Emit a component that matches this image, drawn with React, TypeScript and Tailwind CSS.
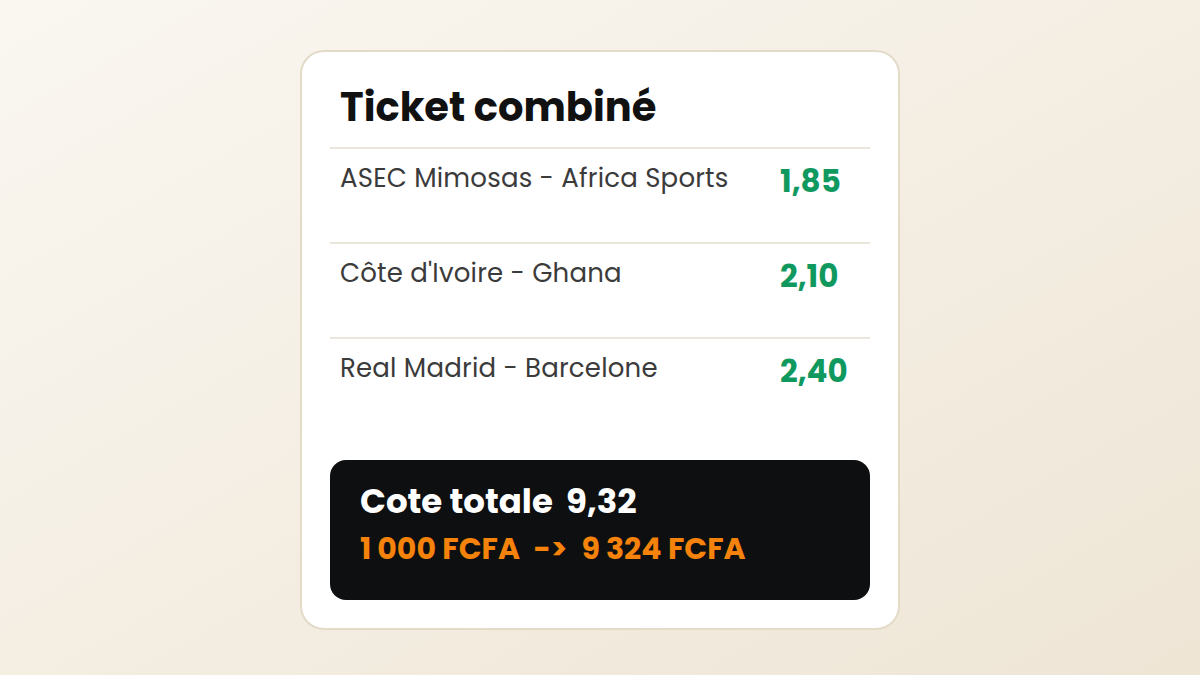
import React from 'react';

const odds = [
  { match: 'ASEC Mimosas - Africa Sports', cote: '1,85' },
  { match: "Côte d'Ivoire - Ghana", cote: '2,10' },
  { match: 'Real Madrid - Barcelone', cote: '2,40' },
];

export default function App() {
  return (
    <div
      className="w-[1200px] h-[675px] flex items-center justify-center bg-gradient-to-br from-[#faf7f1] via-[#f4eee3] to-[#eee5d5]"
      style={{ fontFamily: '"Poppins", "Open Sans", "DejaVu Sans", sans-serif' }}
    >
      <div className="w-[600px] h-[580px] mt-[4px] bg-white border-2 border-[#e3dbc8] rounded-[24px] px-[28px] pb-[28px] flex flex-col">
        {/* Title */}
        <div className="h-[95px] flex items-center pl-[10px] pt-[16px]">
          <h1 className="text-[40px] font-bold text-[#111111] leading-none">Ticket combiné</h1>
        </div>

        {/* Rows */}
        <div className="flex flex-col">
          {odds.map((o) => (
            <div
              key={o.match}
              className="h-[95px] border-t-2 border-[#ebe6dc] grid grid-cols-[1fr_90px] pl-[10px] pt-[12px]"
            >
              <span className="text-[26px] leading-[34px] tracking-[0.2px] text-[#3b3b3b]">{o.match}</span>
              <span className="text-[31px] leading-[40px] font-bold text-[#10995f]">{o.cote}</span>
            </div>
          ))}
        </div>

        {/* Total */}
        <div className="mt-auto h-[140px] rounded-[16px] bg-[#0e0f10] px-[30px] pt-[19px] flex flex-col gap-[8px]">
          <div className="text-[34px] leading-[44px] font-bold text-white">
            Cote totale <span className="ml-[6px]">9,32</span>
          </div>
          <div className="text-[30px] leading-[36px] font-bold text-[#f5820a]">
            1&#8201;000 FCFA <span className="ml-[7px] mr-[8px]">-&gt;</span> 9&#8201;324 FCFA
          </div>
        </div>
      </div>
    </div>
  );
}
